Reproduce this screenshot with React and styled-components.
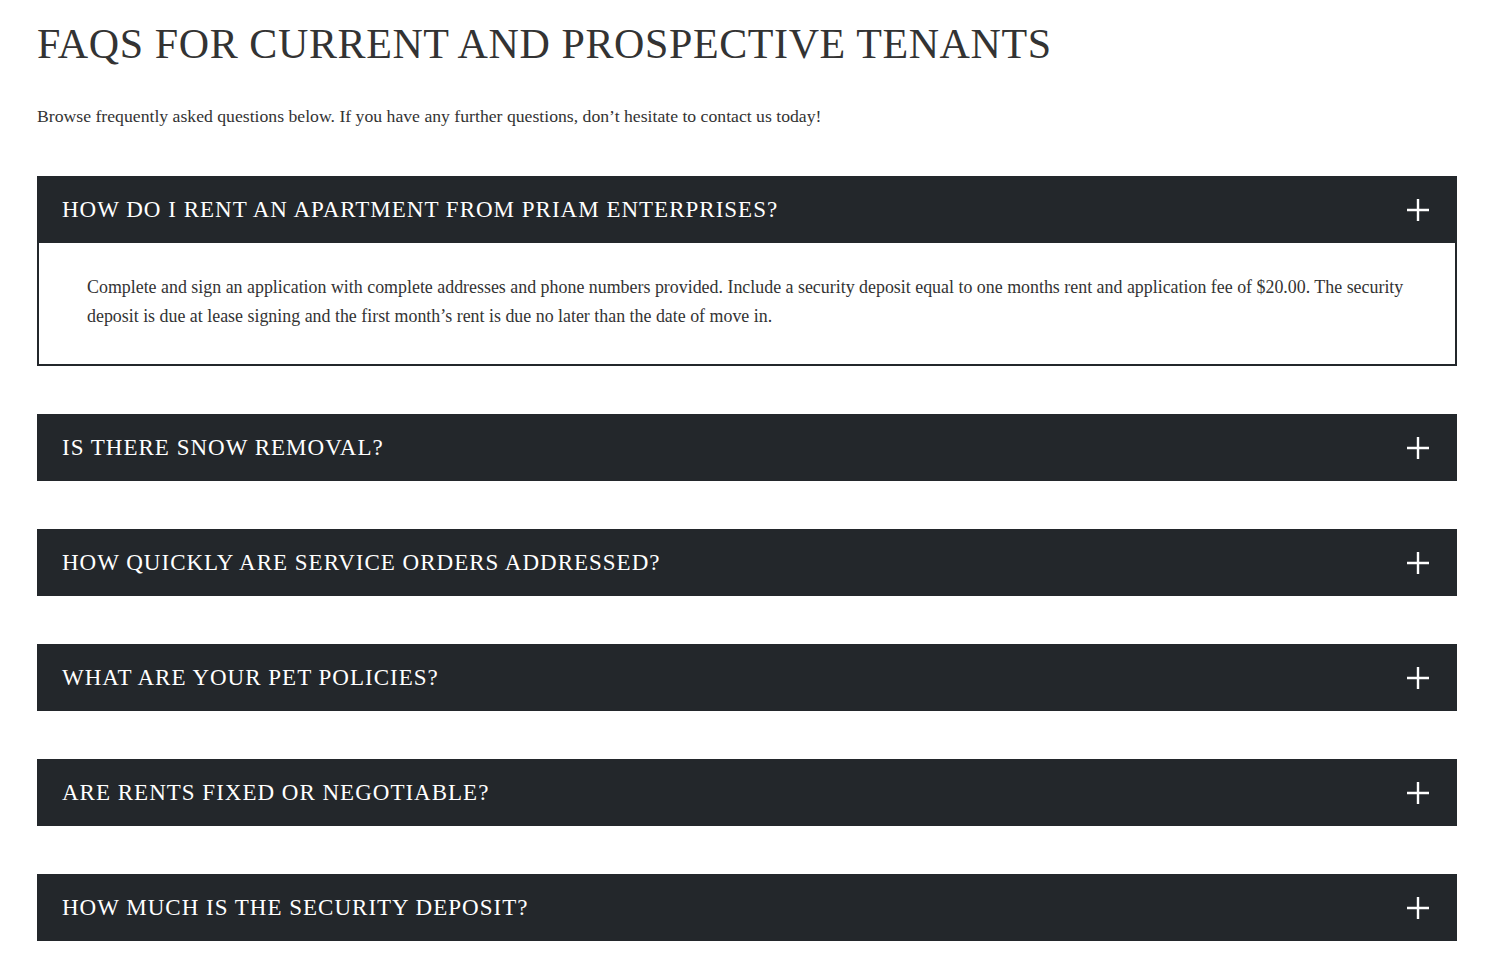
import React from 'react';
import styled, { createGlobalStyle } from 'styled-components';

const GlobalStyle = createGlobalStyle`
  body {
    margin: 0;
    background: #fff;
    font-family: "Liberation Serif", "Times New Roman", serif;
    color: #333;
  }
`;

const faqs = [
  {
    q: 'How do I rent an apartment from Priam Enterprises?',
    a: 'Complete and sign an application with complete addresses and phone numbers provided. Include a security deposit equal to one months rent and application fee of $20.00. The security deposit is due at lease signing and the first month\u2019s rent is due no later than the date of move in.',
    open: true,
  },
  { q: 'Is there snow removal?' },
  { q: 'How quickly are service orders addressed?' },
  { q: 'What are your pet policies?' },
  { q: 'Are rents fixed or negotiable?' },
  { q: 'How much is the security deposit?' },
];

function PlusIcon() {
  return (
    <svg width="24" height="24" viewBox="0 0 24 24" fill="none">
      <path d="M12 1v22M1 12h22" stroke="#fff" strokeWidth="2.4" />
    </svg>
  );
}

export default function App() {
  return (
    <Page>
      <GlobalStyle />
      <Title>FAQs for Current and Prospective Tenants</Title>
      <Intro>
        Browse frequently asked questions below. If you have any further questions, don’t hesitate to contact us today!
      </Intro>
      <List>
        {faqs.map((item) => (
          <Item key={item.q}>
            <Question>
              <span>{item.q}</span>
              <PlusIcon />
            </Question>
            {item.open && (
              <Answer>
                <p>{item.a}</p>
              </Answer>
            )}
          </Item>
        ))}
      </List>
    </Page>
  );
}

const Page = styled.div`
  padding: 18px 35px 24px 37px;
`;

const Title = styled.h1`
  margin: 0;
  font-weight: 400;
  font-size: 42px;
  line-height: 52px;
  text-transform: uppercase;
  letter-spacing: 0.6px;
  color: #333;
`;

const Intro = styled.p`
  margin: 33px 0 0;
  font-size: 17.7px;
  line-height: 26px;
  color: #333;
`;

const List = styled.div`
  margin-top: 47px;
  display: flex;
  flex-direction: column;
  gap: 48px;
`;

const Item = styled.div`
  display: flex;
  flex-direction: column;
`;

const Question = styled.div`
  height: 67px;
  display: flex;
  align-items: center;
  justify-content: space-between;
  padding: 0 27px 0 25px;
  background: #23272b;
  color: #fff;
  font-size: 23px;
  letter-spacing: 1px;
  text-transform: uppercase;
  cursor: pointer;
`;

const Answer = styled.div`
  border: 2px solid #23272b;
  border-top: 0;
  padding: 30px 48px 33px 48px;

  > p {
    margin: 0;
    font-size: 17.9px;
    line-height: 29px;
    color: #333;
  }
`;
